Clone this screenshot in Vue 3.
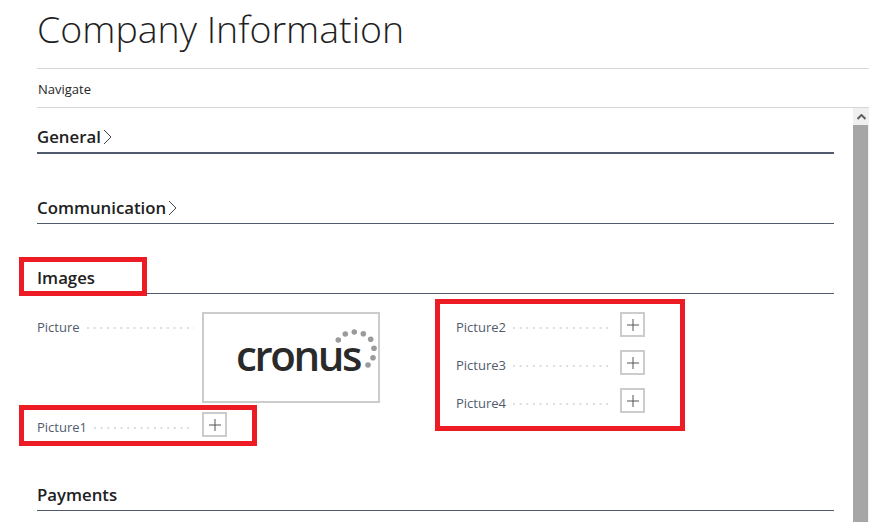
<template>
  <div class="page">
    <h1 class="title">Company Information</h1>
    <nav class="navbar">Navigate</nav>

    <div class="body">
      <div class="content">
        <section v-for="s in collapsed" :key="s" class="section">
          <h2 class="heading" :class="{ thick: s === 'General' }">
            {{ s }}
            <svg class="chev" width="9" height="16" viewBox="0 0 9 16"><path d="M1 1 L8 8 L1 15" fill="none" stroke="#444" stroke-width="1" /></svg>
          </h2>
        </section>

        <section class="section images">
          <h2 class="heading">Images</h2>
          <div class="form">
            <div class="col">
              <div class="field tall">
                <div class="caption">
                  <span class="label">Picture</span>
                  <span class="leader"></span>
                </div>
                <div class="logo">
                  <svg width="174" height="87" viewBox="0 0 174 87">
                    <text x="32" y="57" class="logo-text">cronus</text>
                    <circle v-for="(d, i) in logoDots" :key="i" :cx="d[0]" :cy="d[1]" r="2.8" fill="#9b9b9b" />
                  </svg>
                </div>
              </div>
              <div class="field">
                <div class="caption">
                  <span class="label">Picture1</span>
                  <span class="leader"></span>
                </div>
                <button class="add"><svg width="14" height="14" viewBox="0 0 14 14"><path d="M7 1 V13 M1 7 H13" stroke="#555" stroke-width="1" /></svg></button>
              </div>
            </div>
            <div class="col">
              <div v-for="p in rightPics" :key="p" class="field">
                <div class="caption">
                  <span class="label">{{ p }}</span>
                  <span class="leader"></span>
                </div>
                <button class="add"><svg width="14" height="14" viewBox="0 0 14 14"><path d="M7 1 V13 M1 7 H13" stroke="#555" stroke-width="1" /></svg></button>
              </div>
            </div>
          </div>
        </section>

        <section class="section">
          <h2 class="heading">Payments</h2>
        </section>
      </div>

      <div class="scrollbar">
        <div class="sb-up"><svg width="9" height="6" viewBox="0 0 9 6"><path d="M0.5 5 L4.5 1 L8.5 5" fill="none" stroke="#606060" stroke-width="2" /></svg></div>
        <div class="sb-thumb"></div>
      </div>
    </div>

    <!-- annotation boxes drawn on top of the screenshot -->
    <div class="mark m1"></div>
    <div class="mark m2"></div>
    <div class="mark m3"></div>
  </div>
</template>

<script setup>
const collapsed = ['General', 'Communication']
const rightPics = ['Picture2', 'Picture3', 'Picture4']
const logoDots = [
  [134.3, 26], [141.3, 20], [150.3, 18], [159.3, 19.7],
  [166.7, 25.3], [170, 34.3], [169, 43.7], [164, 51],
]
</script>

<style>
html, body { margin: 0; background: #fff; overflow: hidden; }
</style>

<style scoped>
.page {
  position: relative;
  width: 883px;
  height: 522px;
  overflow: hidden;
  box-sizing: border-box;
  padding: 0 14px 0 37px;
  font-family: "Open Sans", "Noto Sans", sans-serif;
  color: #212121;
}
.title {
  margin: 0;
  height: 68px;
  font-size: 37.5px;
  line-height: 57px;
  font-weight: 300;
  color: #1f1f1f;
}
.navbar {
  box-sizing: border-box;
  height: 40px;
  border-top: 1px solid #d6d6dc;
  border-bottom: 1px solid #d6d6d6;
  padding-left: 1px;
  font-size: 13px;
  line-height: 40px;
  color: #262626;
}
.body {
  display: flex;
  justify-content: space-between;
  height: 414px;
}
.content { width: 797px; }
.section { height: 70px; }
.section:first-child { height: 71px; }
.images { height: 217px; }
.heading {
  display: flex;
  align-items: center;
  gap: 2px;
  box-sizing: border-box;
  height: 45px;
  margin: 0;
  padding-top: 12px;
  border-bottom: 1px solid #505c6d;
  font-size: 16.8px;
  font-weight: 600;
  color: #212121;
}
.heading.thick { height: 46px; border-bottom-width: 2px; }
.chev { margin-top: 1px; }
.form { display: flex; padding-top: 18px; }
.col { width: 419px; flex: none; }
.col + .col { width: 250px; }
.field {
  display: flex;
  align-items: flex-start;
  height: 38px;
}
.field.tall { height: 100px; }
.caption {
  display: flex;
  align-items: flex-start;
  gap: 7px;
  width: 157px;
  padding-right: 8px;
  flex: none;
}
.col + .col .caption { width: 156px; }
.label {
  font-size: 13px;
  line-height: 30px;
  color: #505c6d;
}
.leader {
  flex: 1;
  height: 2px;
  margin-top: 15px;
  background-image: linear-gradient(to right, #dcdcdc 2px, transparent 2px);
  background-size: 6.67px 2px;
}
.logo {
  width: 174px;
  height: 87px;
  border: 2px solid #ccc;
  flex: none;
}
.logo svg { display: block; }
.logo-text {
  font-family: "Open Sans", "Noto Sans", sans-serif;
  font-size: 42px;
  font-weight: 600;
  letter-spacing: -2.4px;
  fill: #2a2a2a;
}
.add {
  display: flex;
  align-items: center;
  justify-content: center;
  box-sizing: border-box;
  width: 25px;
  height: 25px;
  padding: 0;
  flex: none;
  border: 2px solid #ccc;
  background: #fff;
}
.scrollbar {
  width: 16px;
  display: flex;
  flex-direction: column;
  background: #f0f0f0;
}
.sb-up {
  height: 17px;
  display: flex;
  align-items: center;
  justify-content: center;
}
.sb-thumb { flex: 1; width: 15px; background: #a6a6a6; }
.mark {
  position: absolute;
  box-sizing: border-box;
  border: 5px solid #ed1c24;
}
.m1 { left: 19px; top: 257px; width: 128px; height: 39px; }
.m2 { left: 19px; top: 405px; width: 238px; height: 41px; }
.m3 { left: 435px; top: 299px; width: 250px; height: 132px; }
</style>
